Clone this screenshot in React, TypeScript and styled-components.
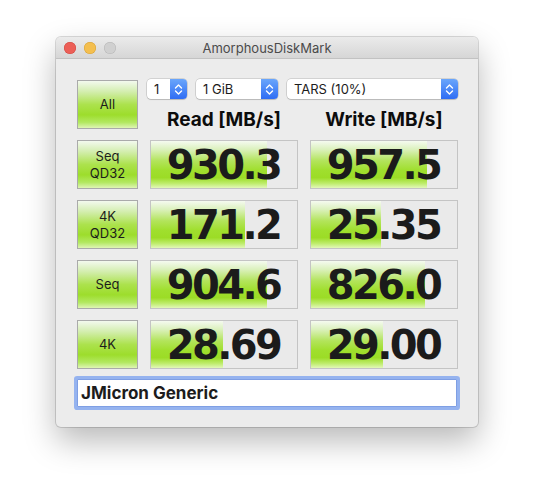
import React from "react";
import styled, { createGlobalStyle } from "styled-components";

const Global = createGlobalStyle`
  html, body { margin: 0; padding: 0; background: #ffffff; }
  body { font-family: "Inter", "Liberation Sans", sans-serif; }
`;

const Page = styled.div`
  padding: 37px 0 0 56px;
  width: 534px;
  height: 502px;
  box-sizing: border-box;
`;

const Window = styled.div`
  width: 422px;
  height: 390px;
  background: #ececec;
  border-radius: 5px;
  box-shadow: 0 0 0 1px rgba(0, 0, 0, 0.14), 0 14px 32px rgba(0, 0, 0, 0.28);
  overflow: hidden;
  display: flex;
  flex-direction: column;
`;

const TitleBar = styled.div`
  height: 22px;
  flex: none;
  display: grid;
  grid-template-columns: 80px 1fr 80px;
  align-items: center;
  background: linear-gradient(to bottom, #ebebeb, #d6d6d6);
  border-bottom: 1px solid #c2c2c2;
  box-sizing: border-box;
`;

const Lights = styled.div`
  display: flex;
  gap: 8px;
  padding-left: 8px;
`;

const Light = styled.span<{ $c: string; $b: string }>`
  width: 12px;
  height: 12px;
  border-radius: 50%;
  background: ${(p) => p.$c};
  box-shadow: inset 0 0 0 0.5px ${(p) => p.$b};
`;

const Title = styled.div`
  text-align: center;
  font-size: 13px;
  color: #4b4b4b;
  font-family: "Inter", "Liberation Sans", sans-serif;
`;

const Content = styled.div`
  padding: 21px 20px 0 21px;
  display: grid;
  grid-template-columns: 61px 148px 148px;
  grid-auto-rows: 49px;
  column-gap: 12px;
  row-gap: 11px;
`;

const GreenButton = styled.div`
  box-sizing: border-box;
  border: 1px solid #aaaaaa;
  background: linear-gradient(
    to bottom,
    #f3f9ee 0%,
    #d4eeb0 22%,
    #ace24d 50%,
    #9ddd2c 72%,
    #b2e860 88%,
    #dff5b5 100%
  );
  display: flex;
  flex-direction: column;
  align-items: center;
  justify-content: center;
  font-family: "Inter", "Liberation Sans", sans-serif;
  font-size: 13px;
  line-height: 17px;
  color: #1c1c1c;
`;

const Controls = styled.div`
  grid-column: 2 / 4;
  display: flex;
  flex-direction: column;
`;

const SelectRow = styled.div`
  display: flex;
  gap: 9px;
  margin: -1px 0 0 -3px;
`;

const Select = styled.div<{ $w: number }>`
  width: ${(p) => p.$w}px;
  height: 20px;
  box-sizing: border-box;
  background: #ffffff;
  border-radius: 4px;
  box-shadow: 0 0 0 0.5px rgba(0, 0, 0, 0.22), 0 1px 1px rgba(0, 0, 0, 0.12);
  display: flex;
  align-items: center;
  justify-content: space-between;
  overflow: hidden;
  font-family: "Inter", "Liberation Sans", sans-serif;
  font-size: 13px;
  color: #1c1c1c;
`;

const SelectText = styled.span`
  padding-left: 7px;
  white-space: nowrap;
`;

const Stepper = styled.span`
  width: 17px;
  height: 20px;
  flex: none;
  background: linear-gradient(to bottom, #6aa6fb, #2f6df4);
  display: flex;
  align-items: center;
  justify-content: center;
`;

const Headers = styled.div`
  display: grid;
  grid-template-columns: 148px 148px;
  column-gap: 12px;
  margin-top: 9px;
`;

const Header = styled.div`
  text-align: center;
  font-family: "Inter", "Liberation Sans", sans-serif;
  font-weight: 700;
  font-size: 19px;
  line-height: 24px;
  color: #0c0c0c;
`;

const Cell = styled.div`
  position: relative;
  box-sizing: border-box;
  border: 1px solid #c4c4c4;
  background: #eaeaea;
  overflow: hidden;
`;

const Bar = styled.div`
  position: absolute;
  left: 0;
  top: 0;
  bottom: 0;
  background: linear-gradient(
    to bottom,
    #f5faf0 0%,
    #dbf1bc 18%,
    #b3e45c 42%,
    #a0df2e 62%,
    #9cdc26 78%,
    #bdec6a 90%,
    #e2f7b9 100%
  );
`;

const Value = styled.div`
  position: relative;
  height: 100%;
  display: flex;
  align-items: center;
  justify-content: center;
  padding-right: 1px;
  font-family: "DejaVu Sans", "Verdana", sans-serif;
  font-weight: 700;
  font-size: 40px;
  letter-spacing: -2.6px;
  color: #1b1b1b;
`;

const NameField = styled.div`
  grid-column: 1 / 4;
  height: 28px;
  margin-top: -1px;
  width: 380px;
  box-sizing: border-box;
  background: #ffffff;
  border: 1px solid #7f9fe4;
  box-shadow: 0 0 0 3px rgba(120, 160, 240, 0.75);
  border-radius: 1px;
  display: flex;
  align-items: center;
  padding-left: 3px;
  font-family: "Inter", "Liberation Sans", sans-serif;
  font-weight: 700;
  font-size: 17px;
  color: #1c1c1c;
`;

const Chevrons = () => (
  <svg width="9" height="13" viewBox="0 0 9 13">
    <path d="M1.5 5 L4.5 2 L7.5 5" fill="none" stroke="#fff" strokeWidth="1.4" strokeLinecap="round" strokeLinejoin="round" />
    <path d="M1.5 8 L4.5 11 L7.5 8" fill="none" stroke="#fff" strokeWidth="1.4" strokeLinecap="round" strokeLinejoin="round" />
  </svg>
);

type Row = { label: string[]; read: number; write: number; rs: string; ws: string };

const rows: Row[] = [
  { label: ["Seq", "QD32"], read: 930.3, write: 957.5, rs: "930.3", ws: "957.5" },
  { label: ["4K", "QD32"], read: 171.2, write: 25.35, rs: "171.2", ws: "25.35" },
  { label: ["Seq"], read: 904.6, write: 826.0, rs: "904.6", ws: "826.0" },
  { label: ["4K"], read: 28.69, write: 29.0, rs: "28.69", ws: "29.00" },
];

const frac = (v: number) => Math.max(0, Math.min(1, (Math.log10(v) + 1) / 5));

const Result = ({ v, s }: { v: number; s: string }) => (
  <Cell>
    <Bar style={{ width: `${Math.round(frac(v) * 146)}px` }} />
    <Value>{s}</Value>
  </Cell>
);

export default function App() {
  return (
    <Page>
      <Global />
      <Window>
        <TitleBar>
          <Lights>
            <Light $c="#ec5f57" $b="#d0473f" />
            <Light $c="#f4bf4f" $b="#d6a035" />
            <Light $c="#d0d0d0" $b="#b5b5b5" />
          </Lights>
          <Title>AmorphousDiskMark</Title>
          <span />
        </TitleBar>
        <Content>
          <GreenButton>All</GreenButton>
          <Controls>
            <SelectRow>
              <Select $w={40}>
                <SelectText>1</SelectText>
                <Stepper><Chevrons /></Stepper>
              </Select>
              <Select $w={82}>
                <SelectText>1 GiB</SelectText>
                <Stepper><Chevrons /></Stepper>
              </Select>
              <Select $w={171}>
                <SelectText>TARS (10%)</SelectText>
                <Stepper><Chevrons /></Stepper>
              </Select>
            </SelectRow>
            <Headers>
              <Header>Read [MB/s]</Header>
              <Header>Write [MB/s]</Header>
            </Headers>
          </Controls>
          {rows.map((r, i) => (
            <React.Fragment key={i}>
              <GreenButton>
                {r.label.map((l) => (
                  <span key={l}>{l}</span>
                ))}
              </GreenButton>
              <Result v={r.read} s={r.rs} />
              <Result v={r.write} s={r.ws} />
            </React.Fragment>
          ))}
          <NameField>JMicron Generic</NameField>
        </Content>
      </Window>
    </Page>
  );
}
